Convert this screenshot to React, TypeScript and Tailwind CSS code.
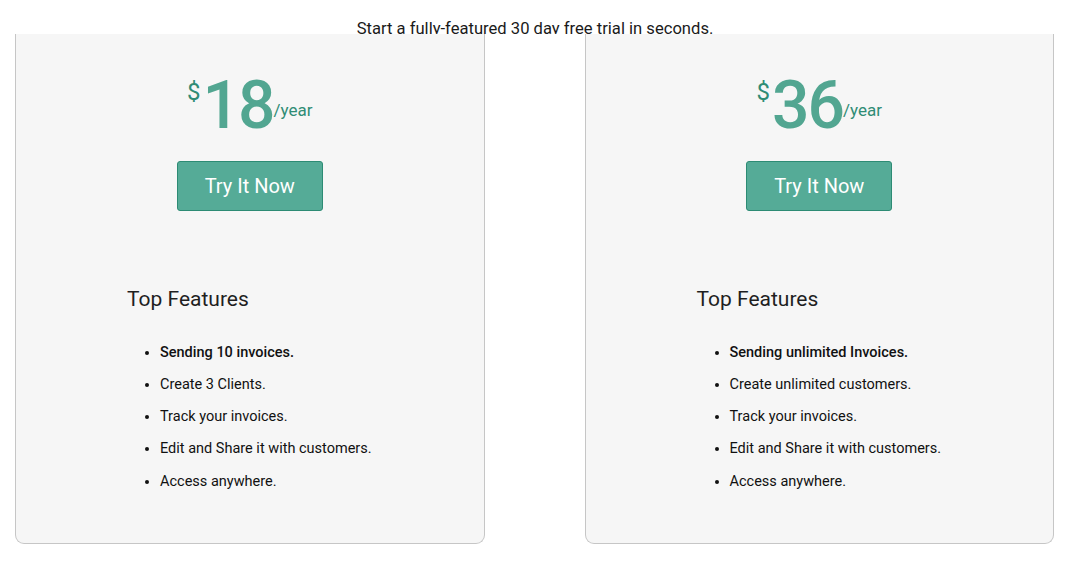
const plans = [
  {
    price: "18",
    features: [
      "Sending 10 invoices.",
      "Create 3 Clients.",
      "Track your invoices.",
      "Edit and Share it with customers.",
      "Access anywhere.",
    ],
  },
  {
    price: "36",
    features: [
      "Sending unlimited Invoices.",
      "Create unlimited customers.",
      "Track your invoices.",
      "Edit and Share it with customers.",
      "Access anywhere.",
    ],
  },
];

const PlanCard = ({ price, features }: { price: string; features: string[] }) => {
  return (
    <div className="h-[510px] bg-[#f6f6f6] border-x border-b border-[#c6c6c6] rounded-b-[9px] pt-[39px]">
      <div className="flex justify-center items-start">
        <span className="text-[24px] leading-none mt-[7px] mr-[2px] text-[#2f8c75]">$</span>
        <span className="text-[66px] leading-none font-medium text-[#52a691] tracking-[-2px]">{price}</span>
        <span className="text-[17px] leading-none mt-[29px] text-[#2f8c75]">/year</span>
      </div>
      <div className="flex justify-center mt-[22px]">
        <button className="w-[146px] h-[50px] bg-[#55ab97] border border-[#2d8b74] rounded-[3px] text-white text-[20px]">
          Try It Now
        </button>
      </div>
      <div className="pl-[111px] mt-[76px]">
        <h3 className="text-[21px] leading-[24px] text-[#1f1f1f]">Top Features</h3>
        <ul className="list-disc pl-[33px] mt-[25.5px] text-[14.5px] leading-[32.25px] text-[#111]">
          {features.map((f, i) => (
            <li key={f} className={i === 0 ? "font-medium" : ""}>
              {f}
            </li>
          ))}
        </ul>
      </div>
    </div>
  );
};

export default function App() {
  return (
    <div className="w-[1070px] h-[561px] bg-white font-['Roboto',sans-serif] overflow-hidden">
      <div className="h-[34px] overflow-hidden pt-[17px] text-center text-[16.6px] leading-[24px] text-[#1a1a1a]">
        Start a fully-featured 30 day free trial in seconds.
      </div>
      <div className="grid grid-cols-2 gap-[100px] pl-[15px] pr-[16px]">
        {plans.map((p) => (
          <PlanCard key={p.price} price={p.price} features={p.features} />
        ))}
      </div>
    </div>
  );
}
